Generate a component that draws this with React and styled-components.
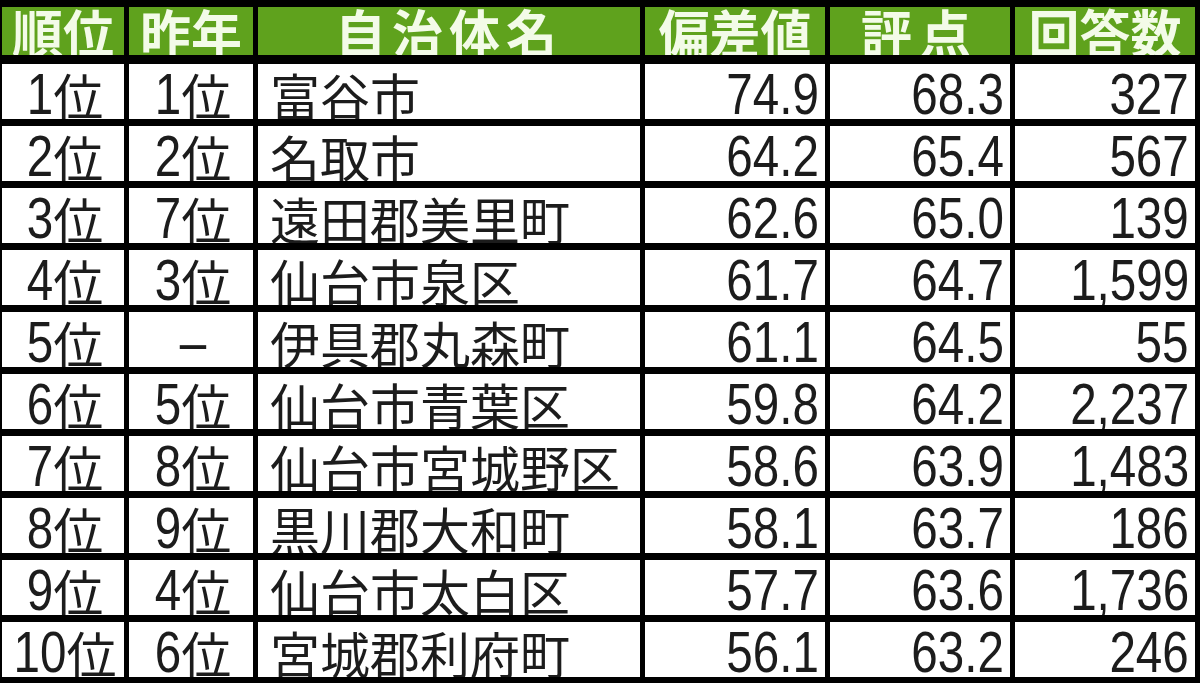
import React, { Fragment } from "react";
import styled, { createGlobalStyle } from "styled-components";

const GlobalStyle = createGlobalStyle`
  html, body {
    margin: 0;
    padding: 0;
    background: #000000;
  }
`;

const Table = styled.div`
  display: grid;
  grid-template-columns: 122px 124px 382px 180px 180px 180px;
  grid-template-rows: 50px repeat(10, 55px);
  gap: 7px 5px;
  padding: 7px 5px 6px 2px;
  width: 1200px;
  height: 683px;
  box-sizing: border-box;
  background: #000000;
  font-family: "Noto Sans CJK JP", "Liberation Sans", sans-serif;
`;

const HeadCell = styled.div`
  display: flex;
  align-items: center;
  justify-content: center;
  box-sizing: border-box;
  border-bottom: 2px solid #000000;
  background: #5fa21d;
  color: #f3fbe8;
  font-weight: 700;
  font-size: 51px;
  line-height: 1;
  letter-spacing: ${(p) => p.$spacing || 0}px;
  overflow: hidden;
  white-space: nowrap;
`;

const Cell = styled.div`
  display: flex;
  align-items: center;
  justify-content: ${(p) =>
    p.$align === "right" ? "flex-end" : p.$align === "left" ? "flex-start" : "center"};
  padding: ${(p) =>
    p.$align === "right" ? "4px 6px 0 0" : p.$align === "left" ? "4px 0 0 12px" : "4px 0 0 4px"};
  background: #ffffff;
  color: #1c1c1c;
  font-size: 50px;
  line-height: 1;
  overflow: hidden;
  white-space: nowrap;
`;

// digits in the sheet are narrower than Arial, so squeeze them and pull the
// freed space back with a negative margin
const SQUEEZE = 0.82;

const Num = styled.span`
  display: inline-block;
  font-family: "Liberation Sans", Arial, sans-serif;
  font-size: 58px;
  line-height: 1;
  transform: scaleX(${SQUEEZE});
  transform-origin: right center;
`;

const advance = (text) =>
  [...text].reduce((w, ch) => w + (ch === "." || ch === "," ? 0.278 : 0.556), 0);

const Digits = ({ children }) => {
  const text = String(children);
  const shrink = advance(text) * (1 - SQUEEZE);
  return <Num style={{ marginLeft: `-${shrink}em` }}>{text}</Num>;
};

const headers = [
  { label: "順位" },
  { label: "昨年" },
  { label: "自治体名", spacing: 6 },
  { label: "偏差値" },
  { label: "評点", spacing: 8 },
  { label: "回答数" },
];

const rows = [
  { rank: 1, last: "1", name: "富谷市", dev: "74.9", score: "68.3", count: "327" },
  { rank: 2, last: "2", name: "名取市", dev: "64.2", score: "65.4", count: "567" },
  { rank: 3, last: "7", name: "遠田郡美里町", dev: "62.6", score: "65.0", count: "139" },
  { rank: 4, last: "3", name: "仙台市泉区", dev: "61.7", score: "64.7", count: "1,599" },
  { rank: 5, last: null, name: "伊具郡丸森町", dev: "61.1", score: "64.5", count: "55" },
  { rank: 6, last: "5", name: "仙台市青葉区", dev: "59.8", score: "64.2", count: "2,237" },
  { rank: 7, last: "8", name: "仙台市宮城野区", dev: "58.6", score: "63.9", count: "1,483" },
  { rank: 8, last: "9", name: "黒川郡大和町", dev: "58.1", score: "63.7", count: "186" },
  { rank: 9, last: "4", name: "仙台市太白区", dev: "57.7", score: "63.6", count: "1,736" },
  { rank: 10, last: "6", name: "宮城郡利府町", dev: "56.1", score: "63.2", count: "246" },
];

const App = () => {
  return (
    <>
      <GlobalStyle />
      <Table>
        {headers.map((h) => (
          <HeadCell key={h.label} $spacing={h.spacing}>
            {h.label}
          </HeadCell>
        ))}
        {rows.map((r) => (
          <Fragment key={r.rank}>
            <Cell>
              <Digits>{r.rank}</Digits>位
            </Cell>
            <Cell>
              {r.last ? (
                <>
                  <Digits>{r.last}</Digits>位
                </>
              ) : (
                <Digits>–</Digits>
              )}
            </Cell>
            <Cell $align="left">{r.name}</Cell>
            <Cell $align="right">
              <Digits>{r.dev}</Digits>
            </Cell>
            <Cell $align="right">
              <Digits>{r.score}</Digits>
            </Cell>
            <Cell $align="right">
              <Digits>{r.count}</Digits>
            </Cell>
          </Fragment>
        ))}
      </Table>
    </>
  );
};

export default App;
